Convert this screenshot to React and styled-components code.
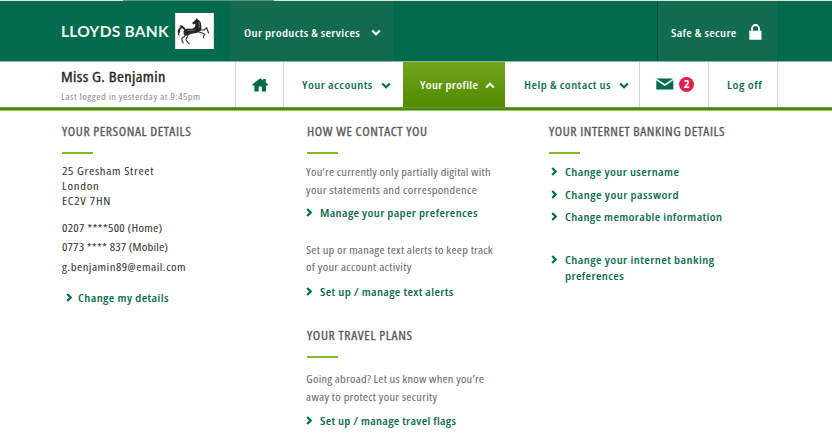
import React from 'react';
import styled, { createGlobalStyle, css } from 'styled-components';

const GREEN = '#006a4d';

const GlobalStyle = createGlobalStyle`
  *, *::before, *::after { box-sizing: border-box; }
  body {
    margin: 0;
    background: #fff;
    font-family: "Open Sans", "Noto Sans", sans-serif;
    font-stretch: 75%;
  }
`;

const Page = styled.div`
  width: 832px;
  height: 448px;
  overflow: hidden;
  background: #fff;
`;

const Text = styled.span`
  display: block;
  white-space: nowrap;
  transform: scaleX(${p => p.$scale || 1.1});
  transform-origin: 0 50%;
  letter-spacing: ${p => p.$ls}px;
`;

/* Header */
const TopEdge = styled.div`
  height: 1px;
  background: linear-gradient(90deg, #dfe6e2 123px, #5f9681 123px 274px, #dfe6e2 274px);
`;
const Header = styled.header`
  display: flex;
  height: 60px;
  background: ${GREEN};
`;
const Brand = styled.div`
  display: flex;
  width: 230px;
  padding: 12px 0 0 61px;
`;
const BrandName = styled.span`
  width: 114px;
  font: 700 15.5px/36px Lato, sans-serif;
  letter-spacing: 0.26px;
  white-space: nowrap;
  color: #eef7f2;
`;
const HeaderPanel = styled.div`
  display: flex;
  align-items: center;
  width: ${p => p.$width}px;
  margin-left: ${p => p.$offset || 0}px;
  padding: 3px 0 0 ${p => p.$pad}px;
  background: #106b4f;
  color: #fff;
  font-size: 11.5px;
  font-weight: 600;
  ${p => p.$edge && css`box-shadow: inset 1px 0 #04523c;`}
`;
const Label = styled.div`
  width: ${p => p.$width}px;
  line-height: 16px;
`;

/* Navigation */
const Nav = styled.nav`
  display: flex;
  height: 46px;
  border-top: 1px solid #8db5a7;
  color: #0b6e50;
  font-size: 11.5px;
  font-weight: 600;
`;
const Customer = styled.div`
  width: 235px;
  padding: 5px 0 0 60.5px;
`;
const CustomerName = styled.div`
  font-size: 14.3px;
  font-weight: 400;
  line-height: 20px;
  color: #2a2a2a;
  -webkit-text-stroke: 0.35px #2a2a2a;
`;
const LastLogin = styled.div`
  font-size: 9.6px;
  font-weight: 400;
  line-height: 20px;
  color: #8c8c8c;
`;
const NavItem = styled.div`
  display: flex;
  align-items: center;
  gap: ${p => p.$gap || 0}px;
  width: ${p => p.$width}px;
  padding: 1px 0 0 ${p => p.$pad}px;
  ${p => p.$line && css`border-left: 1px solid #d4d4d4;`}
  ${p => p.$active && css`
    color: #fff;
    background: linear-gradient(#72a51a, #528a00);
  `}
`;
const Badge = styled.span`
  width: 15px;
  height: 15px;
  margin-top: -2px;
  border-radius: 50%;
  background: #de2150;
  color: #fff;
  font: 700 10px/15px "Open Sans", sans-serif;
  text-align: center;
`;
const Rule = styled.div`
  height: 4px;
  background: linear-gradient(#6c9a3a 1px, #4a8800 1px 3px, #9cc45a 3px);
`;

/* Profile panel */
const Panel = styled.main`
  display: grid;
  grid-template-columns: 245px 242px 1fr;
  padding: 10px 0 0 62px;
  font-size: 11.5px;
`;
const Heading = styled.h2`
  margin: ${p => p.$top || 0}px 0 0 -0.5px;
  font-size: 11.8px;
  font-weight: 400;
  line-height: 20px;
  color: #5a5a5a;
  -webkit-text-stroke: 0.3px #5a5a5a;
  &::after {
    content: "";
    display: block;
    width: 31px;
    height: 2px;
    margin: 11px 0 0 0.5px;
    background: #84b929;
  }
`;
const Address = styled.address`
  margin-top: ${p => p.$top}px;
  font-style: normal;
  line-height: ${p => p.$line}px;
  color: #303030;
`;
const Copy = styled.p`
  margin: ${p => p.$top}px 0 0 -1px;
  font-size: 11.3px;
  line-height: 17.7px;
  color: #686868;
`;
const Link = styled.a`
  display: grid;
  grid-template-columns: ${p => p.$indent || 14}px 1fr;
  margin: ${p => p.$top}px 0 0 ${p => p.$left || -0.6}px;
  font-weight: 600;
  line-height: 15.3px;
  color: #0a6c4e;
`;
const Icon = styled.svg`
  display: block;
  flex: none;
  margin-top: ${p => p.$top || 0}px;
`;

const Chevron = ({ up }) => (
  <Icon width="10" height="7" viewBox="0 0 10 7">
    <path d={up ? 'M1.2 5.5 5 1.8 8.8 5.5' : 'M1.2 1.5 5 5.2 8.8 1.5'} fill="none" stroke="currentColor" strokeWidth="2.2" />
  </Icon>
);

const Arrow = () => (
  <Icon width="7" height="9" viewBox="0 0 7 9" $top={3}>
    <path d="M1.2 1 4.7 4.5 1.2 8" fill="none" stroke={GREEN} strokeWidth="2.2" />
  </Icon>
);

const Horse = () => (
  <Icon width="39" height="36" viewBox="21 14 116 108">
    <rect x="21" y="14" width="116" height="108" fill="#fdfdfd" />
    <g fill="#242424">
      <path d="M86 29l4 5c6 3 9 9 9 17l1 11c-2 7-9 10-17 12l-14 2c-5 1-7 5-12 6-8 1-12-5-11-12 2-7 9-10 17-9 8 1 14-1 17-5 2-4 2-7 1-10l-6 2-3-4 7-7 3-2z" />
      <path d="M48 65c-5-7-9-7-13-5l3-7-5 2c1-5 7-6 11-2 5 4 8 7 8 12zM42 59c-6 2-6 7-7 12-2 5-3 9 0 13-5-2-7-7-5-12l-2 1c1-9 4-16 12-18z" />
    </g>
    <g fill="none" stroke="#333" strokeLinejoin="round" strokeLinecap="round">
      <path d="M94 65l14 0 7-7 3 7 3 9" strokeWidth="3.6" />
      <path d="M90 70l12 4 8 4-5 8 2 3" strokeWidth="3.2" />
      <path d="M53 78l-6 8-6 4 1 9 3 5" strokeWidth="3.4" />
      <path d="M60 78l-3 9-4 7 6 8 4 4" strokeWidth="3.2" />
    </g>
    <path d="M57 67c8-2 17 1 24-3M91 40c3 6 3 12 1 19" fill="none" stroke="#999" strokeWidth="2" />
  </Icon>
);

const Lock = () => (
  <Icon width="13" height="16" viewBox="0 0 13 16" $top={-1}>
    <path d="M3 8V4.5a3.5 3.5 0 0 1 7 0V8" fill="none" stroke="#fff" strokeWidth="1.8" />
    <rect x="0.3" y="6.7" width="12.2" height="9" rx="0.5" fill="#fff" />
  </Icon>
);

const Home = () => (
  <Icon width="17" height="14" viewBox="0 0 17 14">
    <path d="M8.2 0.3 11.2 2.5V1h2.6v3.4l2.4 2-1 1.3-1.2-.4V13.5H9.8V8.6H6.7v4.9H2.4V7.3l-1.2.4-1-1.3z" fill={GREEN} />
  </Icon>
);

const Mail = () => (
  <Icon width="18" height="12" viewBox="0 0 18 12" $top={-2}>
    <path d="M0.3 0.4h17L8.8 6.1zM0.3 2.2 8.8 7.9l8.5-5.7v9.2h-17z" fill={GREEN} />
  </Icon>
);

const ActionLink = ({ lines, ...rest }) => (
  <Link {...rest}>
    <Arrow />
    <div>{lines.map(([text, ls]) => <Text key={text} $ls={ls}>{text}</Text>)}</div>
  </Link>
);

export default function App() {
  return (
    <Page>
      <GlobalStyle />
      <TopEdge />
      <Header>
        <Brand>
          <BrandName>LLOYDS BANK</BrandName>
          <Horse />
        </Brand>
        <HeaderPanel $width={163} $pad={13.5}>
          <Label $width={127.5}><Text $ls={0.3}>Our products &amp; services</Text></Label>
          <Chevron />
        </HeaderPanel>
        <HeaderPanel $width={120} $offset={264} $pad={14} $edge>
          <Label $width={78}><Text $ls={0.3}>Safe &amp; secure</Text></Label>
          <Lock />
        </HeaderPanel>
      </Header>
      <Nav>
        <Customer>
          <CustomerName><Text $scale={1.15} $ls={0.33}>Miss G. Benjamin</Text></CustomerName>
          <LastLogin><Text $ls={0.39}>Last logged in yesterday at 9:45pm</Text></LastLogin>
        </Customer>
        <NavItem $width={48} $pad={16} $line><Home /></NavItem>
        <NavItem $width={120} $pad={17.5} $line>
          <Label $width={79.5}><Text $ls={0.43}>Your accounts</Text></Label>
          <Chevron />
        </NavItem>
        <NavItem $width={102} $pad={16.5} $active>
          <Label $width={65.5}><Text $ls={0.3}>Your profile</Text></Label>
          <Chevron up />
        </NavItem>
        <NavItem $width={134} $pad={19}>
          <Label $width={95}><Text $ls={0.4}>Help &amp; contact us</Text></Label>
          <Chevron />
        </NavItem>
        <NavItem $width={69} $pad={16} $gap={5} $line><Mail /><Badge>2</Badge></NavItem>
        <NavItem $width={69} $pad={18} $line><Label><Text $ls={0.52}>Log off</Text></Label></NavItem>
        <NavItem $width={55} $pad={0} $line />
      </Nav>
      <Rule />
      <Panel>
        <section>
          <Heading><Text $scale={1.15} $ls={0.51}>YOUR PERSONAL DETAILS</Text></Heading>
          <Address $top={9} $line={15.2}>
            <Text $ls={0.6}>25 Gresham Street</Text>
            <Text $ls={0.69}>London</Text>
            <Text $ls={0.71}>EC2V 7HN</Text>
          </Address>
          <Address $top={9} $line={19.5}>
            <Text $ls={0.24}>0207 ****500 (Home)</Text>
            <Text $ls={0.15}>0773 **** 837 (Mobile)</Text>
            <Text $ls={0.44}>g.benjamin89@email.com</Text>
          </Address>
          <ActionLink $top={13.5} $left={3.5} $indent={12.5} lines={[['Change my details', 0.38]]} />
        </section>
        <section>
          <Heading><Text $scale={1.15} $ls={0.53}>HOW WE CONTACT YOU</Text></Heading>
          <Copy $top={9}>
            <Text $ls={0.2}>You’re currently only partially digital with</Text>
            <Text $ls={0.33}>your statements and correspondence</Text>
          </Copy>
          <ActionLink $top={7} lines={[['Manage your paper preferences', 0.32]]} />
          <Copy $top={20}>
            <Text $ls={0.22}>Set up or manage text alerts to keep track</Text>
            <Text $ls={0.28}>of your account activity</Text>
          </Copy>
          <ActionLink $top={7.5} lines={[['Set up / manage text alerts', 0.33]]} />
          <Heading $top={26.5}><Text $scale={1.15} $ls={0.57}>YOUR TRAVEL PLANS</Text></Heading>
          <Copy $top={11.5}>
            <Text $ls={0.2}>Going abroad? Let us know when you’re</Text>
            <Text $ls={0.26}>away to protect your security</Text>
          </Copy>
          <ActionLink $top={8} lines={[['Set up / manage travel flags', 0.26]]} />
        </section>
        <section>
          <Heading><Text $scale={1.15} $ls={0.49}>YOUR INTERNET BANKING DETAILS</Text></Heading>
          <ActionLink $top={10} $left={1.5} lines={[['Change your username', 0.37]]} />
          <ActionLink $top={7.4} $left={1.5} lines={[['Change your password', 0.42]]} />
          <ActionLink $top={7.4} $left={1.5} lines={[['Change memorable information', 0.32]]} />
          <ActionLink $top={27.8} $left={1.5} lines={[['Change your internet banking', 0.41], ['preferences', 0.34]]} />
        </section>
      </Panel>
    </Page>
  );
}
